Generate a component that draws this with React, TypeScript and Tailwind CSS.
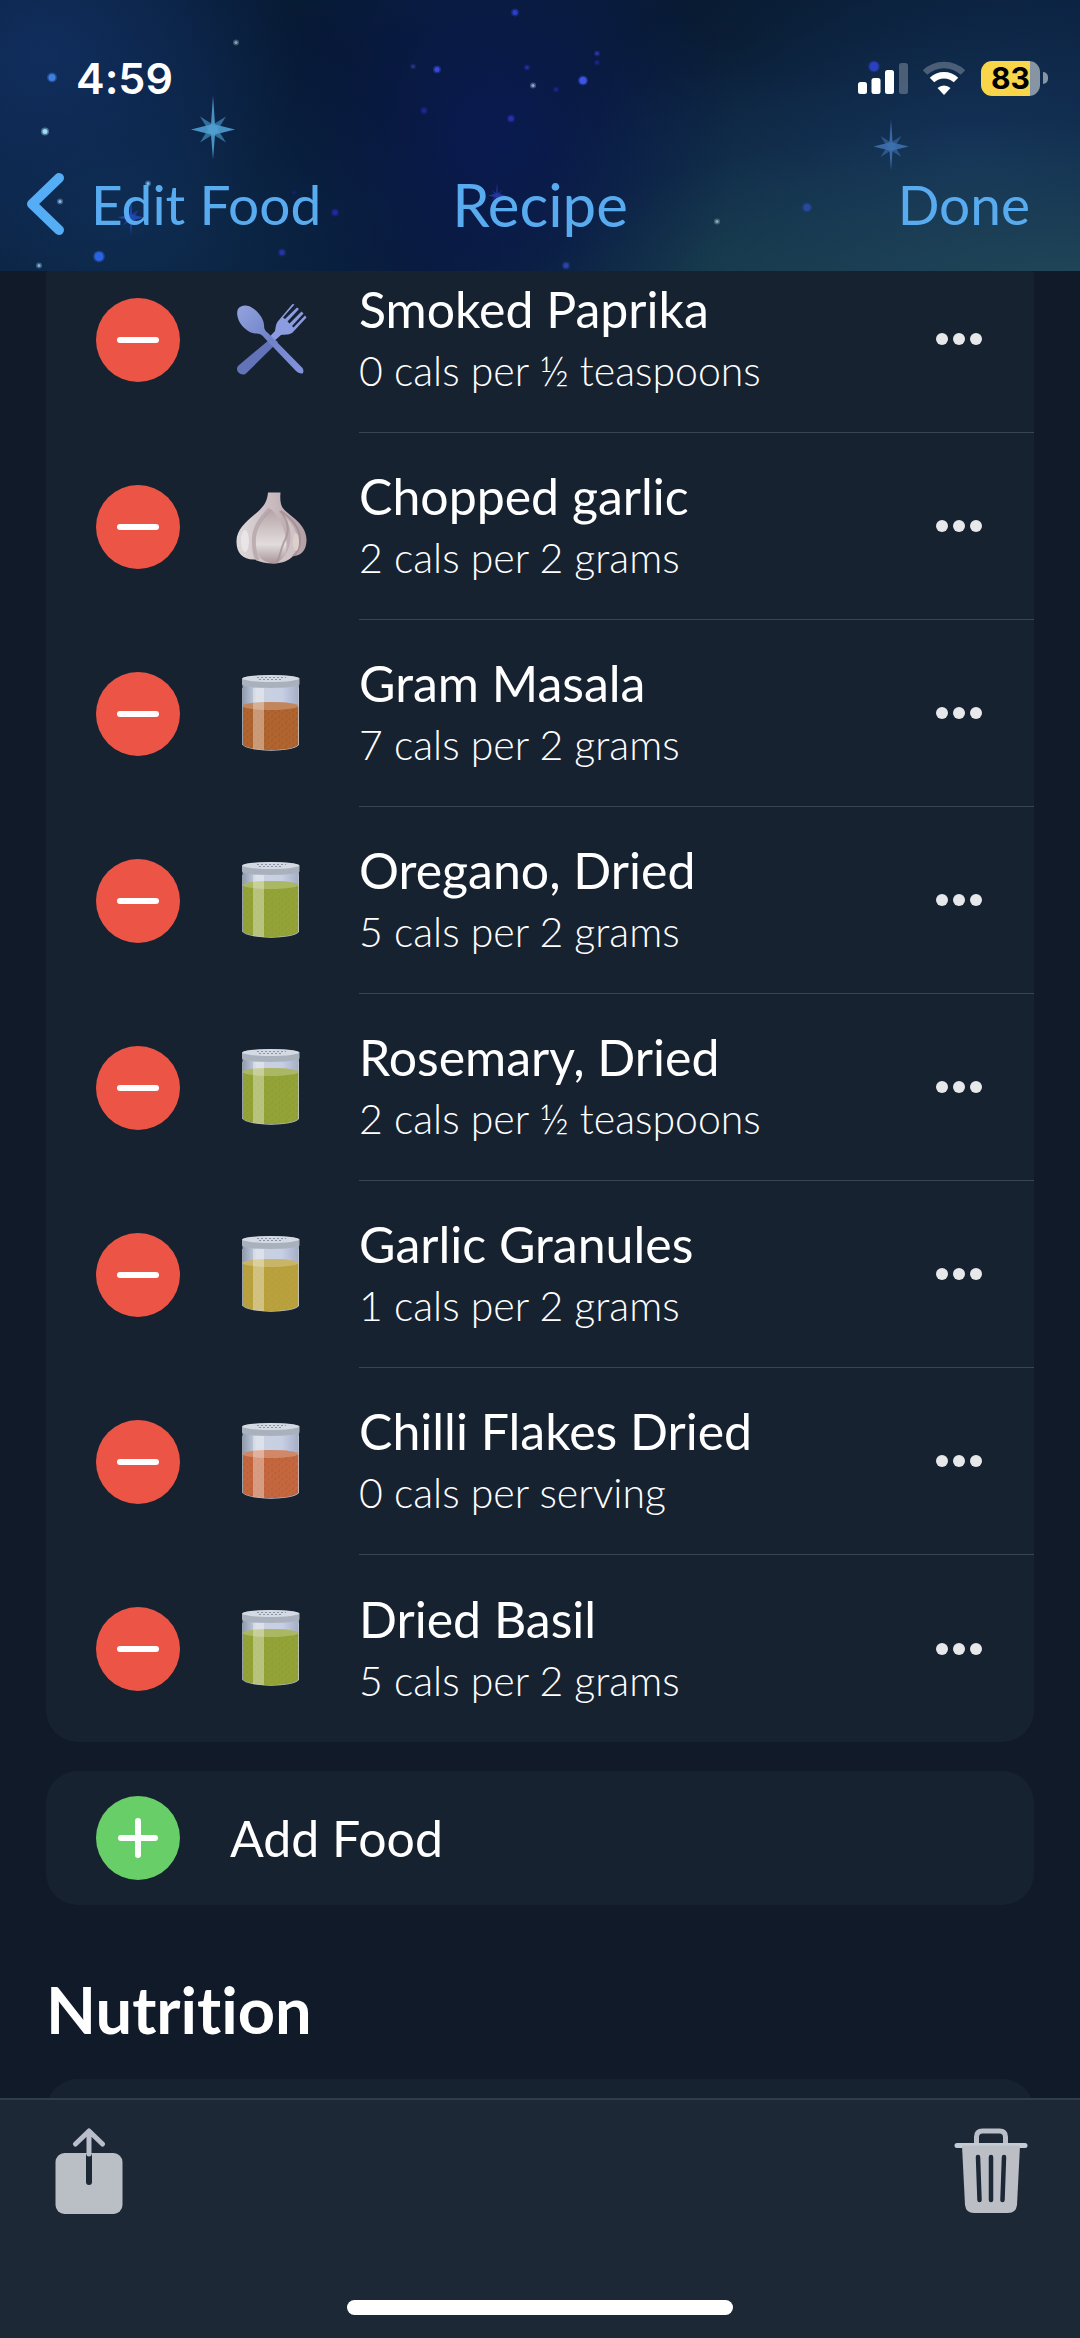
import { useId } from 'react';

type IconName = 'cutlery' | 'garlic' | 'jar';

interface Ingredient {
  name: string;
  detail: string;
  icon: IconName;
  fill?: string;
  grain?: string;
  level?: number;
}

const ingredients: Ingredient[] = [
  { name: 'Smoked Paprika', detail: '0 cals per ½ teaspoons', icon: 'cutlery' },
  { name: 'Chopped garlic', detail: '2 cals per 2 grams', icon: 'garlic' },
  { name: 'Gram Masala', detail: '7 cals per 2 grams', icon: 'jar', fill: '#b0642f', grain: '#8a4a1c', level: 31 },
  { name: 'Oregano, Dried', detail: '5 cals per 2 grams', icon: 'jar', fill: '#93a338', grain: '#7d8d24', level: 23 },
  { name: 'Rosemary, Dried', detail: '2 cals per ½ teaspoons', icon: 'jar', fill: '#93a338', grain: '#7d8d24', level: 23 },
  { name: 'Garlic Granules', detail: '1 cals per 2 grams', icon: 'jar', fill: '#b9a13e', grain: '#ab922f', level: 27 },
  { name: 'Chilli Flakes Dried', detail: '0 cals per serving', icon: 'jar', fill: '#c4673f', grain: '#9f4a2a', level: 31 },
  { name: 'Dried Basil', detail: '5 cals per 2 grams', icon: 'jar', fill: '#93a338', grain: '#7d8d24', level: 23 }
];

// x, y, radius, colour
const stars: [number, number, number, string][] = [
  [52, 82, 4, '#3f7fe0'],
  [45, 136, 3, '#9fdcf5'],
  [236, 47, 2, '#8aa3b5'],
  [60, 206, 2, '#8fb8dd'],
  [99, 261, 5, '#2b62e0'],
  [39, 270, 2, '#7fb0d8'],
  [148, 188, 2, '#6fc0ef'],
  [282, 257, 3, '#2733a8'],
  [335, 217, 3, '#2229a0'],
  [294, 197, 2, '#152070'],
  [413, 71, 2, '#2a3680'],
  [437, 74, 3, '#3a48d8'],
  [424, 115, 3, '#1e2488'],
  [511, 123, 3, '#2a30b0'],
  [515, 17, 3, '#2c3fc8'],
  [527, 72, 2, '#2a2fa8'],
  [533, 90, 2, '#8fa8d0'],
  [583, 85, 4, '#3c55e8'],
  [597, 58, 2, '#2a38b8'],
  [597, 67, 2, '#1c2590'],
  [556, 94, 2, '#1d2690'],
  [566, 270, 3, '#2c44a8'],
  [717, 226, 2, '#8ba8b5'],
  [807, 212, 4, '#28489f'],
  [874, 71, 5, '#2b40c0']
];

const Sparkle = ({ x, y, size, color }: { x: number; y: number; size: number; color: string }) => (
  <g transform={`translate(${x} ${y}) scale(${size})`} fill={color}>
    <path d="M0-34 2-5 22 0 2 5 0 30-2 5-22 0-2-5Z" opacity=".9" />
    <path d="M-13-13 0-5 13-13 5 0 13 13 0 5-13 13-5 0Z" opacity=".6" />
    <circle r="5" />
  </g>
);

const Sky = () => (
  <svg
    className="absolute inset-0 h-full w-full"
    viewBox="0 0 1080 280"
    preserveAspectRatio="xMidYMid slice"
    aria-hidden="true"
  >
    {stars.map(([x, y, r, color]) => (
      <g key={`${x}-${y}`} fill={color}>
        <circle cx={x} cy={y} r={r + 1} opacity=".4" />
        <circle cx={x} cy={y} r={r - 0.5} />
      </g>
    ))}
    <Sparkle x={213} y={134} size={1} color="#4f9ed0" />
    <Sparkle x={891} y={151} size={0.8} color="#3d6fae" />
    <Sparkle x={131} y={222} size={0.6} color="#2148b8" />
    <Sparkle x={497} y={200} size={0.4} color="#2438a0" />
  </svg>
);

const StatusIcons = () => (
  <div className="flex items-center">
    <svg className="h-[34px] w-[50px]" viewBox="0 0 50 34" fill="#fff" aria-hidden="true">
      <rect x="0" y="21" width="9" height="12" rx="2.500" />
      <rect x="13.500" y="17" width="9" height="16" rx="2.500" />
      <rect x="27" y="9" width="9" height="24" rx="2.500" />
      <rect x="41" y="2" width="9" height="31" rx="2.500" opacity=".25" />
    </svg>
    <svg className="ml-[14px] h-[34px] w-[44px]" viewBox="0 0 44 34" fill="none" aria-hidden="true">
      <path d="M3 11.500a27.500 27.500 0 0 1 38 0" stroke="#fff" strokeWidth="6.500" opacity=".25" />
      <path d="M10 19a17.500 17.500 0 0 1 24 0" stroke="#fff" strokeWidth="6.500" />
      <path d="M22 34l-6.500-7a9.500 9.500 0 0 1 13 0Z" fill="#fff" />
    </svg>
    <div className="ml-[15px] flex h-[35px] w-[59px] items-center justify-center overflow-hidden rounded-[11px] bg-linear-to-r from-[#f9d549] from-83% to-[#8694a3] to-83% font-['Inter'] text-[30px] font-bold text-black">
      83
    </div>
    <div className="ml-[3px] h-[12px] w-[5px] rounded-r-full bg-[#8694a3]" />
  </div>
);

const CutleryIcon = () => {
  const id = useId();
  return (
    <svg className="h-[80px] w-[72px]" viewBox="0 0 72 80" aria-hidden="true">
      <defs>
        <linearGradient id={id} x1="0" y1="0" x2="1" y2="1">
          <stop offset="0" stopColor="#93a3de" />
          <stop offset=".5" stopColor="#7082c8" />
          <stop offset="1" stopColor="#8494dc" />
        </linearGradient>
      </defs>
      <path
        d="M36 37.500 42 42 10.500 73C8 75.500 4.500 74.500 2.500 72.500S.5 67.500 2.500 65.500Z"
        fill="#6273b8"
      />
      <path
        d="M58.500 4.500 47 17.500 49 19 61 7.500 63 9 51.500 21.500 53.500 23.500 65.500 11.500 67.500 13.500 56 26 57.500 27.500 69 15.500 70.500 17.500 57.500 31.500C54.500 35 50 34.500 45 35L37 42 32.500 38 39 31C40 26 40 23 43 20L56.500 4Z"
        fill="#8c9ce0"
      />
      <path
        d="M2 9C5 4.500 12 4 18 9 25 14.500 28 21 28 25 28 29 29 31 32 33L66.500 68C68 71 67.500 72.500 66.500 73.500 64 74 62 72.500 60 71L29 38.500C26 34.500 24 33.500 19 33.500 13 33 6 27 3 21 1 16 .5 12 2 9Z"
        fill={`url(#${id})`}
      />
    </svg>
  );
};

const GarlicIcon = () => {
  const id = useId();
  return (
    <svg className="h-[80px] w-[72px]" viewBox="0 0 72 80" aria-hidden="true">
      <defs>
        <linearGradient id={`${id}a`} x1="0" y1="0" x2="1" y2="0">
          <stop offset="0" stopColor="#e0dadd" />
          <stop offset=".5" stopColor="#c9bbc0" />
          <stop offset="1" stopColor="#b39fa4" />
        </linearGradient>
        <linearGradient id={`${id}b`} x1="0" y1="0" x2="0" y2="1">
          <stop offset="0" stopColor="#b5a3a8" />
          <stop offset=".65" stopColor="#e2dcdc" />
          <stop offset="1" stopColor="#a8959a" />
        </linearGradient>
      </defs>
      <path
        d="M32 5.500 44.500 5.500C44 12 44 18 48 22.500 54 29 70 37 70.500 52 71 63 65 69 57 69 53 74 45 76.500 37 76.500 30 76.500 24 75 19 72.500 7 73 .5 66 .5 55 0 43 10 35 18 28 26 21 31 17 32 5.500Z"
        fill={`url(#${id}a)`}
      />
      <path d="M35 22C26 31 19 42 19 55 19 66 24 75 37 76.500 48 76 52 64 50 52 48 40 43 30 35 22Z" fill={`url(#${id}b)`} />
      <path d="M44 26C53 34 56 43 54 56 52 66 47 72 42 75 55 75 61 66 61 55 62 42 53 32 44 26Z" fill="#cfc3c6" />
      <path d="M45 24C56 32 65 41 64 55 64 62 61 66 57 69" fill="none" stroke="#9c878d" strokeWidth="2" opacity=".7" />
      <path d="M44 24C52 33 54 43 49 53 45 60 45 67 41 75" fill="none" stroke="#a8949a" strokeWidth="2" opacity=".8" />
      <path d="M34 22C24 32 17 42 18 56 18 63 19 69 22 73" fill="none" stroke="#ab999e" strokeWidth="4" opacity=".6" />
      <ellipse cx="60" cy="55" rx="3" ry="9" fill="#ddd0cc" />
      <ellipse cx="9" cy="54" rx="4" ry="11" fill="#f0ecee" opacity=".7" />
    </svg>
  );
};

const JarIcon = ({ fill, grain, level }: { fill: string; grain: string; level: number }) => {
  const id = useId();
  return (
    <svg className="h-[80px] w-[72px]" viewBox="0 0 72 80" aria-hidden="true">
      <defs>
        <linearGradient id={`${id}glass`} x1="0" y1="0" x2="1" y2="0">
          <stop offset="0" stopColor="#8f9bb0" />
          <stop offset=".25" stopColor="#c9d1df" />
          <stop offset=".7" stopColor="#c7cfe4" />
          <stop offset="1" stopColor="#a3aec6" />
        </linearGradient>
        <pattern id={`${id}grain`} width="7" height="6" patternUnits="userSpaceOnUse">
          <circle cx="1" cy="1" r=".8" fill={grain} />
          <circle cx="4.500" cy="3" r=".8" fill={grain} />
          <circle cx="2" cy="5" r=".6" fill={grain} />
        </pattern>
      </defs>
      <path d="M6.500 10H63V71C57 78.500 13 78.500 6.500 71Z" fill={`url(#${id}glass)`} />
      <path d={`M7 ${level + 2}H62.500V70.500C56 78 14 78 7 70.500Z`} fill={fill} />
      <path d={`M7 ${level + 2}H62.500V70.500C56 78 14 78 7 70.500Z`} fill={`url(#${id}grain)`} opacity=".45" />
      <ellipse cx="34.500" cy={level + 1} rx="28" ry="4" fill={fill} />
      <ellipse cx="34.500" cy={level + 1} rx="28" ry="4" fill="#fff" opacity=".22" />
      <path d="M17 14H28V76L17 75Z" fill="#fff" opacity=".35" />
      <path d="M6.500 14V71M62.500 14V71" stroke="#d0d4d8" strokeWidth="1" opacity=".55" />
      <path d="M6 4.500C6 .5 63.500 .5 63.500 4.500V10.500C61 15 8 15 6 10.500Z" fill="#a9b1bc" />
      <ellipse cx="34.700" cy="4.500" rx="28.500" ry="3.500" fill="#d3dae4" />
      <path d="M21 3.500H50M23 5.500H47" stroke="#8a93a3" strokeWidth="1" strokeDasharray="2 2" />
    </svg>
  );
};

const FoodIcon = ({ item }: { item: Ingredient }) => {
  if (item.icon === 'cutlery') return <CutleryIcon />;
  if (item.icon === 'garlic') return <GarlicIcon />;
  return <JarIcon fill={item.fill ?? '#93a338'} grain={item.grain ?? '#7d8d24'} level={item.level ?? 23} />;
};

const IngredientRow = ({ item, last }: { item: Ingredient; last: boolean }) => (
  <li className="flex h-[187px] items-stretch pl-[50px]">
    <div className="flex items-center">
      <button
        type="button"
        aria-label={`Remove ${item.name}`}
        className="flex size-[84px] items-center justify-center rounded-full bg-[#ec5545]"
      >
        <span className="h-[6px] w-[42px] rounded-full bg-white" />
      </button>
      <div className="ml-14 w-[72px]">
        <FoodIcon item={item} />
      </div>
    </div>
    <div
      className={`ml-[51px] flex flex-1 items-center justify-between pr-[52px] ${last ? '' : 'border-b border-[#3a4553]'}`}
    >
      <div className="text-white">
        <p className="text-[50px] leading-[64px]">{item.name}</p>
        <p className="text-[41px] leading-[60px] font-light">{item.detail}</p>
      </div>
      <button type="button" aria-label={`More options for ${item.name}`} className="flex gap-[5px] py-4">
        <span className="size-3 rounded-full bg-[#e6e8ea]" />
        <span className="size-3 rounded-full bg-[#e6e8ea]" />
        <span className="size-3 rounded-full bg-[#e6e8ea]" />
      </button>
    </div>
  </li>
);

const App = () => {
  return (
    <div className="flex h-screen flex-col overflow-hidden bg-[#101a28] font-['Lato','Noto_Sans',sans-serif] [font-variant-ligatures:none]">
      <header className="relative z-10 h-[271px] shrink-0 bg-[#0a1f3c] bg-[radial-gradient(ellipse_260px_220px_at_4%_20%,#102d5c_0%,transparent_100%),radial-gradient(ellipse_300px_230px_at_12%_80%,#0e2c50_0%,transparent_100%),radial-gradient(ellipse_240px_260px_at_46%_50%,#0a1a50_0%,transparent_100%),radial-gradient(ellipse_320px_240px_at_30%_50%,#04142a_0%,transparent_100%),radial-gradient(ellipse_560px_180px_at_100%_110%,#224a5a_0%,transparent_100%),radial-gradient(ellipse_420px_220px_at_90%_60%,#143358_0%,transparent_100%),radial-gradient(ellipse_300px_200px_at_68%_100%,#123442_0%,transparent_100%),radial-gradient(ellipse_300px_140px_at_68%_15%,#07182c_0%,transparent_100%)]">
        <Sky />
        <div className="relative flex h-[156px] items-center justify-between pr-8 pl-[76px]">
          <time className="font-['Inter'] text-[43px] font-semibold text-white">4:59</time>
          <StatusIcons />
        </div>
        <nav className="relative grid h-[96px] grid-cols-[1fr_auto_1fr] items-center px-[26px] text-[#59abf0]">
          <button type="button" className="flex items-center justify-self-start text-[55px]">
            <svg className="mr-[26px] h-[64px] w-[39px]" viewBox="0 0 39 64" fill="none" aria-hidden="true">
              <path d="M33 6 6 32l27 26" stroke="#54adf5" strokeWidth="10" strokeLinecap="round" strokeLinejoin="round" />
            </svg>
            Edit Food
          </button>
          <h1 className="text-[60px]">Recipe</h1>
          <button type="button" className="mr-6 justify-self-end text-[55px]">
            Done
          </button>
        </nav>
      </header>

      <main className="min-h-0 flex-1 overflow-hidden px-[46px]">
        <ul className="-mt-[25px] rounded-[32px] bg-[#172231]">
          {ingredients.map((item, i) => (
            <IngredientRow key={item.name} item={item} last={i === ingredients.length - 1} />
          ))}
        </ul>

        <button
          type="button"
          className="mt-[29px] flex h-[134px] w-full items-center rounded-[32px] bg-[#172231] pl-[50px] text-left text-[50px] text-white"
        >
          <span className="mr-[50px] flex size-[84px] items-center justify-center rounded-full bg-[#68ce67]">
            <svg className="size-10" viewBox="0 0 40 40" fill="none" aria-hidden="true">
              <path d="M20 3v34M3 20h34" stroke="#fff" strokeWidth="6" strokeLinecap="round" />
            </svg>
          </span>
          Add Food
        </button>

        <h2 className="mt-16 text-[65px] leading-[80px] font-bold text-white">Nutrition</h2>
        <section className="mt-[30px] h-[200px] rounded-[32px] bg-[#172231]" aria-label="Nutrition" />
      </main>

      <footer className="flex h-[240px] shrink-0 flex-col justify-between border-t-2 border-[#313c4a] bg-[#1d2837] pb-[23px]">
        <div className="flex justify-between pt-7 pr-[52px] pl-[55px]">
          <button type="button" aria-label="Share">
            <svg className="h-[86px] w-[68px]" viewBox="0 0 68 86" fill="none" strokeLinecap="round" aria-hidden="true">
              <rect x=".5" y="25" width="67" height="61" rx="9" fill="#babec5" />
              <path d="M34 28v26" stroke="#1d2837" strokeWidth="6" />
              <path d="M34 4v22M20.500 16 34 3l13.500 13" stroke="#babdca" strokeWidth="5" strokeLinejoin="round" />
            </svg>
          </button>
          <button type="button" aria-label="Delete recipe">
            <svg className="h-[86px] w-[74px]" viewBox="0 0 74 86" fill="none" strokeLinecap="round" aria-hidden="true">
              <path d="M22.500 16V9q0-6 6-6h17q6 0 6 6v7" stroke="#bbbfc8" strokeWidth="5" />
              <path d="M3 17.500h68" stroke="#c3cbd4" strokeWidth="5" />
              <path d="M8 17.500h58L63 77q-1 8-9 8H20q-8 0-9-8Z" fill="#bbbec5" />
              <path d="M24 29l1.500 43M37 29v43M50 29l-1.500 43" stroke="#1d2837" strokeWidth="4.500" />
            </svg>
          </button>
        </div>
        <div className="mx-auto h-[15px] w-[386px] rounded-full bg-white" />
      </footer>
    </div>
  );
};

export default App;
